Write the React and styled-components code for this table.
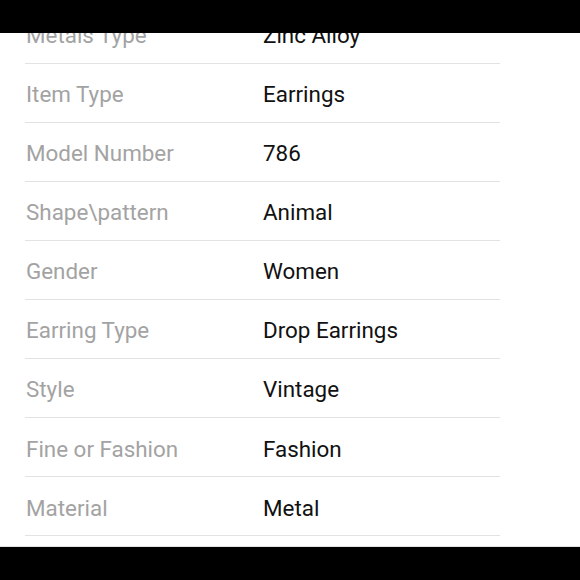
import React from 'react';
import styled, { createGlobalStyle } from 'styled-components';

const GlobalStyle = createGlobalStyle`
  html, body {
    margin: 0;
    padding: 0;
    background: #000;
  }
  body {
    font-family: Roboto, "Liberation Sans", sans-serif;
  }
`;

const Screen = styled.div`
  display: flex;
  flex-direction: column;
  width: 580px;
  height: 580px;
  background: #000;
`;

const Bar = styled.div`
  height: ${(p) => p.size}px;
  flex-shrink: 0;
  background: #000;
`;

const Viewport = styled.div`
  flex: 1;
  overflow: hidden;
  background: #fff;
  border-bottom: 1px solid #e3e3e3;
`;

const SpecList = styled.ul`
  list-style: none;
  margin: -28.5px 80px 0 25px;
  padding: 0;
`;

const Row = styled.li`
  display: grid;
  grid-template-columns: 238px 1fr;
  align-items: center;
  height: 55.1px;
  padding-top: 3px;
  box-sizing: content-box;
  border-bottom: 1px solid #e2e2e2;
  font-size: 22.4px;
  line-height: 1;
`;

const Label = styled.span`
  padding-left: 1px;
  color: #a3a3a3;
`;

const Value = styled.span`
  color: #111;
`;

const specs = [
  ['Metals Type', 'Zinc Alloy'],
  ['Item Type', 'Earrings'],
  ['Model Number', '786'],
  ['Shape\\pattern', 'Animal'],
  ['Gender', 'Women'],
  ['Earring Type', 'Drop Earrings'],
  ['Style', 'Vintage'],
  ['Fine or Fashion', 'Fashion'],
  ['Material', 'Metal'],
];

const App = () => (
  <>
    <GlobalStyle />
    <Screen>
      <Bar size={33} />
      <Viewport>
        <SpecList>
          {specs.map(([label, value]) => (
            <Row key={label}>
              <Label>{label}</Label>
              <Value>{value}</Value>
            </Row>
          ))}
        </SpecList>
      </Viewport>
      <Bar size={33} />
    </Screen>
  </>
);

export default App;
